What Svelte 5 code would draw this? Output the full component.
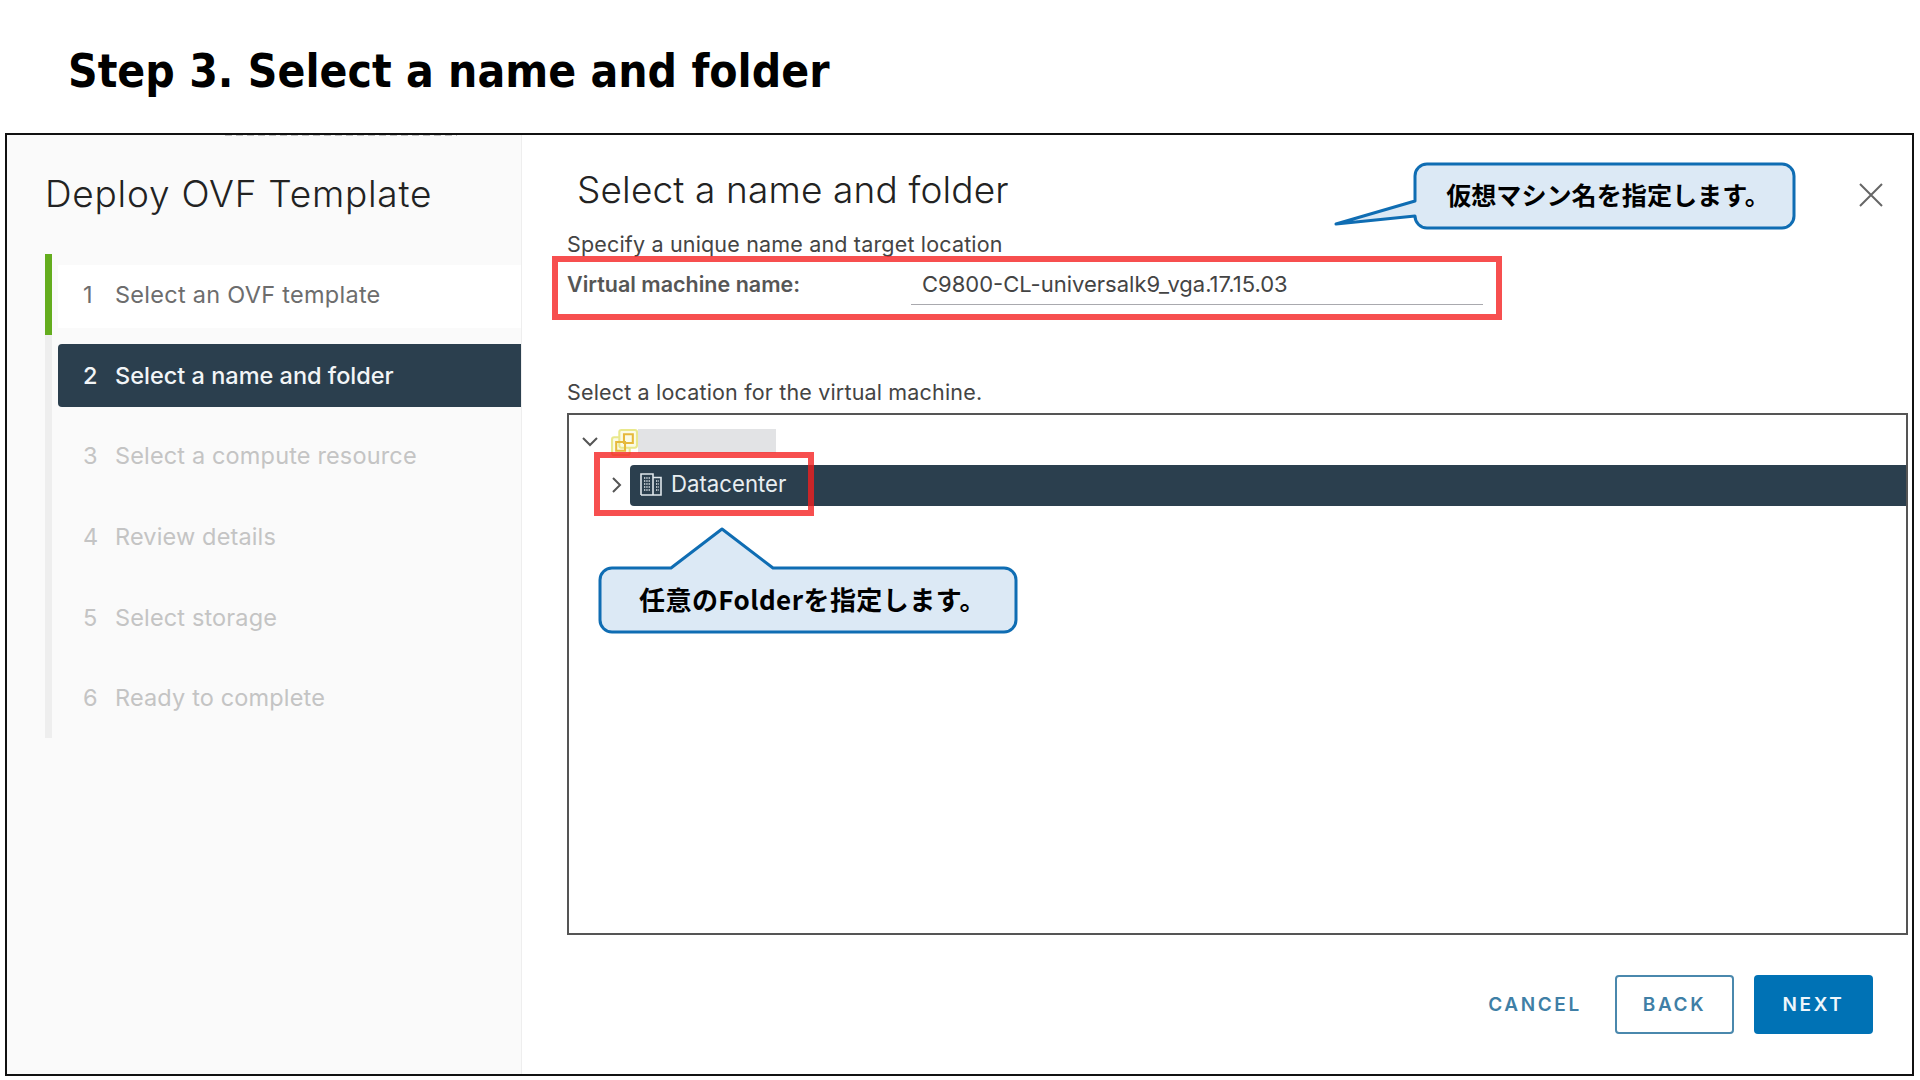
<script>
  const steps = [
    { n: 1, label: 'Select an OVF template', state: 'done' },
    { n: 2, label: 'Select a name and folder', state: 'active' },
    { n: 3, label: 'Select a compute resource', state: 'todo' },
    { n: 4, label: 'Review details', state: 'todo' },
    { n: 5, label: 'Select storage', state: 'todo' },
    { n: 6, label: 'Ready to complete', state: 'todo' }
  ];
</script>

<div class="page">
  <h1>Step 3. Select a name and folder</h1>

  <div class="frame">
    <aside class="side">
      <div class="side-title">Deploy OVF Template</div>
      <ol class="steps">
        {#each steps as s}
          <li class="step {s.state}">
            <div class="row"><span class="num">{s.n}</span><span>{s.label}</span></div>
          </li>
        {/each}
      </ol>
    </aside>

    <main class="main">
      <div class="head">
        <h2>Select a name and folder</h2>
        <svg class="close" viewBox="0 0 24 24" width="24" height="24" aria-hidden="true">
          <path d="M1 1 L23 23 M23 1 L1 23" fill="none" stroke="#666" stroke-width="2" />
        </svg>
      </div>
      <div class="sub">Specify a unique name and target location</div>
      <div class="field">
        <label class="field-label" for="vm">Virtual machine name:</label>
        <div class="field-value" id="vm">C9800-CL-universalk9_vga.17.15.03</div>
      </div>
      <div class="loc">Select a location for the virtual machine.</div>
      <div class="tree">
        <div class="node root">
          <svg class="chev" viewBox="0 0 16 10" width="16" height="10" aria-hidden="true"><path d="M1 1 L8 8 L15 1" fill="none" stroke="#555" stroke-width="2" /></svg>
          <svg class="vc" viewBox="0 0 26 26" width="27" height="27" aria-hidden="true">
            <rect x="1" y="8" width="17" height="17" rx="2" fill="#fbfbe6" stroke="#e9e88c" stroke-width="2" />
            <rect x="8" y="1" width="17" height="17" rx="2" fill="#fbfbe6" stroke="#e9e88c" stroke-width="2" />
            <path d="M5 12.5 H13.5 V21 H5 Z" fill="none" stroke="#e6b93c" stroke-width="2" />
            <path d="M12.5 5 H21 V13.5 H12.5 Z" fill="none" stroke="#e6b93c" stroke-width="2" />
          </svg>
          <div class="masked"></div>
        </div>
        <div class="node child">
          <svg class="chev-r" viewBox="0 0 10 16" width="10" height="16" aria-hidden="true"><path d="M1 1 L8 8 L1 15" fill="none" stroke="#555" stroke-width="2" /></svg>
          <div class="selected">
            <svg class="dc" viewBox="0 0 24 24" width="24" height="24" aria-hidden="true">
              <path d="M2 23 V2 H14 V23 M14 5.5 H22 V23 H2" fill="none" stroke="#dfe7ec" stroke-width="1.6" />
              <path d="M5 6 H11 M5 9 H11 M5 12 H11 M5 15 H11 M5 18 H11 M17 9 H20 M17 12 H20 M17 15 H20 M17 18 H20" fill="none" stroke="#dfe7ec" stroke-width="1.3" stroke-dasharray="1.3 1" />
            </svg>
            <span>Datacenter</span>
          </div>
        </div>
      </div>
      <div class="footer">
        <button class="btn link">CANCEL</button>
        <button class="btn outline">BACK</button>
        <button class="btn primary">NEXT</button>
      </div>
    </main>
  </div>

  <div class="redbox box-name"></div>
  <div class="redbox box-dc"></div>

  <div class="callout c-name">
    <svg class="shape" width="379" height="64" aria-hidden="true">
      <path d="M12 0 H367 a12 12 0 0 1 12 12 V52 a12 12 0 0 1 -12 12 H12 a12 12 0 0 1 -12 -12 V52 L-79 60 L0 37 V12 a12 12 0 0 1 12 -12 Z" />
    </svg>
    <span>仮想マシン名を指定します。</span>
  </div>
  <div class="callout c-folder">
    <svg class="shape" width="416" height="64" aria-hidden="true">
      <path d="M12 0 H71 L122 -39 L173 0 H404 a12 12 0 0 1 12 12 V52 a12 12 0 0 1 -12 12 H12 a12 12 0 0 1 -12 -12 V12 a12 12 0 0 1 12 -12 Z" />
    </svg>
    <span>任意のFolderを指定します。</span>
  </div>
</div>

<style>
  :global(body) { margin: 0; background: #fff; }
  .page {
    position: relative;
    width: 1920px;
    height: 1080px;
    overflow: hidden;
    background: #fff;
    font-family: Inter, "Noto Sans", sans-serif;
  }
  h1 {
    margin: 0;
    height: 133px;
    box-sizing: border-box;
    padding: 41px 0 0 68px;
    font-family: "DejaVu Sans Condensed", "DejaVu Sans", sans-serif;
    font-stretch: condensed;
    font-weight: 700;
    font-size: 45.8px;
    line-height: 60px;
    color: #000;
  }
  .frame {
    box-sizing: border-box;
    display: flex;
    width: 1909px;
    height: 943px;
    margin-left: 5px;
    border: 2px solid #111;
  }
  .side {
    position: relative;
    box-sizing: border-box;
    width: 515px;
    padding: 34px 0 0 38px;
    background: #fafafa;
    border-right: 1px solid #eee;
  }
  .side::before {
    content: "";
    position: absolute;
    left: 218px;
    top: 0;
    width: 232px;
    height: 1px;
    background: repeating-linear-gradient(90deg, #555 0 7px, transparent 7px 11px);
    opacity: 0.35;
  }
  .side-title {
    font-weight: 300;
    font-size: 37px;
    letter-spacing: 0.75px;
    line-height: 50px;
    color: #222;
  }
  .steps {
    list-style: none;
    margin: 35px 0 0;
    padding: 0;
    border-left: 7px solid #eee;
  }
  .step {
    box-sizing: border-box;
    height: 80.67px;
    padding: 9px 0 9px 6px;
    position: relative;
  }
  .step.done::before {
    content: "";
    position: absolute;
    left: -7px;
    top: 0;
    bottom: 0;
    width: 7px;
    background: #64ad1e;
  }
  .row {
    box-sizing: border-box;
    display: flex;
    align-items: center;
    height: 63px;
    padding-left: 25px;
    font-size: 23.5px;
    letter-spacing: 0.15px;
    color: #c4c4c4;
  }
  .num { width: 32px; flex: none; }
  .done .row { background: #fff; color: #6d6d6d; margin-top: 2px; padding-bottom: 4px; letter-spacing: 0.27px; }
  .active .row {
    background: #2b3f4e;
    color: #f2f5f7;
    font-weight: 500;
    letter-spacing: 0;
    border-radius: 4px 0 0 4px;
  }
  .main {
    flex: 1;
    box-sizing: border-box;
    padding: 30px 4px 0 45px;
    background: #fff;
  }
  .head {
    display: flex;
    align-items: center;
    justify-content: space-between;
    height: 50px;
    padding-left: 10px;
  }
  h2 {
    margin: 0;
    font-weight: 300;
    font-size: 37px;
    letter-spacing: 0.15px;
    line-height: 54px;
    color: #222;
  }
  .close { margin: 10px 25px 0 0; }
  .sub, .loc {
    font-size: 21.5px;
    line-height: 24px;
    letter-spacing: 0.17px;
    color: #444;
  }
  .sub { margin-top: 17px; }
  .field {
    display: flex;
    height: 44px;
    margin-top: 4px;
    align-items: center;
  }
  .field-label {
    width: 344px;
    flex: none;
    margin-top: 3px;
    font-size: 21.5px;
    font-weight: 600;
    color: #565656;
  }
  .field-value {
    box-sizing: border-box;
    width: 572px;
    height: 44px;
    margin-top: 1px;
    padding: 0 0 0 11px;
    font-size: 22px;
    line-height: 46px;
    color: #444;
    border-bottom: 1px solid #a9a9ae;
  }
  .loc { margin-top: 76px; }
  .tree {
    box-sizing: border-box;
    height: 522px;
    margin-top: 9px;
    border: 2px solid #555;
    background: #fff;
  }
  .node { display: flex; align-items: center; }
  .root { height: 36px; margin-top: 9px; padding-left: 13px; }
  .vc { margin-left: 13px; flex: none; }
  .masked { width: 138px; height: 24px; background: #e2e3e5; margin-top: -2px; }
  .child { height: 41px; margin-top: 5px; padding-left: 44px; }
  .chev-r { flex: none; margin: 0 0 2px -1px; }
  .selected {
    flex: 1;
    display: flex;
    align-items: center;
    height: 41px;
    margin-left: 8px;
    padding-left: 9px;
    background: #2b3f4e;
    color: #e8eef1;
    font-size: 22.2px;
    border-radius: 4px 0 0 4px;
  }
  .selected span { margin-bottom: 4px; }
  .dc { margin: 0 8px 3px 0; flex: none; }
  .footer {
    display: flex;
    justify-content: flex-end;
    align-items: center;
    margin-top: 40px;
    padding-right: 35px;
    gap: 20px;
  }
  .btn {
    box-sizing: border-box;
    width: 119px;
    height: 59px;
    border-radius: 4px;
    font-family: Inter, sans-serif;
    font-size: 19px;
    font-weight: 600;
    letter-spacing: 2.6px;
    background: none;
    border: 0;
    padding: 0;
  }
  .link { color: #3f7fa6; width: 100px; margin-right: 10px; }
  .outline { color: #3f7fa6; border: 2px solid #4a88ad; background: #fff; }
  .primary { color: #eef6fb; background: #0072b5; }
  .redbox {
    position: absolute;
    box-sizing: border-box;
    border: 6px solid rgba(245, 30, 30, 0.78);
  }
  .box-name { left: 552px; top: 256px; width: 950px; height: 64px; }
  .box-dc { left: 594px; top: 452px; width: 220px; height: 64px; }
  .callout {
    position: absolute;
    display: flex;
    align-items: center;
    justify-content: center;
    height: 64px;
    font-family: "Noto Sans CJK JP", sans-serif;
    font-weight: 700;
    color: #000;
  }
  .callout span { position: relative; margin-bottom: 4px; }
  .shape { position: absolute; left: 0; top: 0; overflow: visible; }
  .shape path { fill: #dce9f5; stroke: #0f6db3; stroke-width: 3; stroke-linejoin: round; }
  .c-name { left: 1415px; top: 164px; width: 379px; padding-left: 7px; box-sizing: border-box; font-size: 25.1px; }
  .c-folder { left: 600px; top: 568px; width: 416px; padding-left: 9px; box-sizing: border-box; font-size: 26px; letter-spacing: 0.45px; }
</style>
